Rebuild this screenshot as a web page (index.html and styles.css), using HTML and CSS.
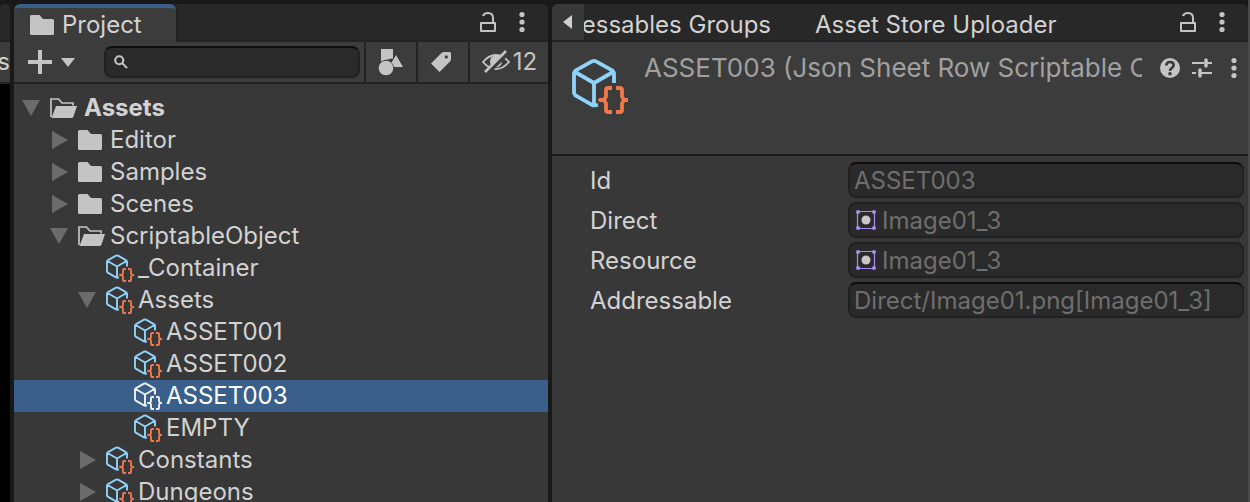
FILE: index.html
```html
<!DOCTYPE html>
<html lang="en">
<head>
<meta charset="utf-8">
<title>Editor</title>
<link rel="stylesheet" href="styles.css">
</head>
<body>
<svg class="defs" aria-hidden="true">
  <symbol id="folder" viewBox="0 0 28 28"><path fill="#c4c4c4" d="M0 5.500Q0 4 1.500 4H9.500L13 8H22.500Q24 8 24 9.500V22.500Q24 24 22.500 24H1.500Q0 24 0 22.500Z"/></symbol>
  <symbol id="folder-open" viewBox="0 0 28 28"><path fill="none" stroke="#c4c4c4" stroke-width="1.700" d="M1 23V5H8.500L12 9H23V11.500"/><path fill="#c4c4c4" d="M6 12H27L23.500 22.500Q23 24 21.500 24H1.500Z"/></symbol>
  <symbol id="asset" viewBox="0 0 28 28">
    <g fill="none" stroke-width="1.900" stroke-linejoin="round">
      <path class="cube" d="M21 12.500V7.500L20.300 6.300L12 1.700Q11 1.200 10 1.700L1.700 6.300L1 7.500V17.500L1.700 18.700L10 23.400Q11 24 13 23.400M1.500 7L11 12.500L20.500 7M11 12.500V23.700"/>
      <path class="braces" d="M20 15H18Q17 15 17 16V19.300L16 21H14H16L17 22.700V26Q17 27 18 27H20M22 15H24Q25 15 25 16V19.300L26 21H28H26L25 22.700V26Q25 27 24 27H22"/>
    </g>
  </symbol>
  <symbol id="down" viewBox="0 0 18 18"><path fill="#6b6b6b" d="M0 1H18L9 17Z"/></symbol>
  <symbol id="right" viewBox="0 0 18 18"><path fill="#6b6b6b" d="M2 0L18 9L2 18Z"/></symbol>
  <symbol id="lock" viewBox="0 0 20 24"><path fill="none" stroke="#c4c4c4" stroke-width="2" stroke-linejoin="round" d="M3 13H17V21H3ZM15 13V8Q15 3 10 3Q6 3 5 6"/></symbol>
  <symbol id="dots" viewBox="0 0 8 24"><g fill="#c4c4c4"><circle cx="4" cy="4.500" r="2.600"/><circle cx="4" cy="12" r="2.600"/><circle cx="4" cy="19.500" r="2.600"/></g></symbol>
  <symbol id="sprite" viewBox="0 0 20 20"><path fill="none" stroke="#a48ef0" stroke-width="1.200" d="M1.500 1.500H18.500V18.500H1.500Z"/><g fill="#a48ef0"><circle cx="2" cy="2" r="2"/><circle cx="18" cy="2" r="2"/><circle cx="2" cy="18" r="2"/><circle cx="18" cy="18" r="2"/></g><circle cx="10" cy="10" r="4.500" fill="#c8c8c8"/></symbol>
</svg>
<main class="editor">
  <section class="panel edge" aria-label="Scene">
    <div class="tabbar"></div>
    <div class="toolbar edge-text">s</div>
    <div class="viewport"></div>
  </section>
  <section class="panel project" aria-label="Project">
    <div class="tabbar">
      <button class="tab active"><svg class="tab-icon" viewBox="0 0 24 28"><use href="#folder" width="28" height="28"/></svg>Project</button>
      <div class="tab-actions">
        <button aria-label="Lock"><svg class="lock"><use href="#lock"/></svg></button>
        <button aria-label="Menu"><svg class="dots"><use href="#dots"/></svg></button>
      </div>
    </div>
    <div class="toolbar">
      <button class="create" aria-label="Create"><svg width="48" height="24" viewBox="0 0 48 24"><path stroke="#c4c4c4" stroke-width="4" d="M0 12H24M12 0V24"/><path fill="#c4c4c4" d="M33 8H47L40 17Z"/></svg></button>
      <label class="search"><svg width="14" height="14" viewBox="0 0 16 16"><circle cx="6" cy="6" r="4.600" fill="none" stroke="#c4c4c4" stroke-width="2.400"/><path stroke="#c4c4c4" stroke-width="2.400" d="M9 9L15 15"/></svg><input type="text" aria-label="Search"></label>
      <button class="tool" aria-label="Filter by type"><svg width="26" height="28" viewBox="0 0 26 28"><g fill="#c4c4c4"><path d="M3 1H15V10.500Q12 10.500 10 11.500Q6 11.500 3 13.500Z"/><circle cx="8" cy="20" r="7.300"/><path d="M18 7L25 19H16Q15.500 16 13.500 14.500Z"/></g></svg></button>
      <button class="tool tag" aria-label="Filter by label"><svg width="22" height="22" viewBox="0 0 22 22"><path fill="#c4c4c4" fill-rule="evenodd" d="M1 12.500L11.500 2Q12.500 1 14 1H19.500Q21 1 21 2.500V8Q21 9.500 20 10.500L9.500 21ZM16.300 4.300A1.600 1.600 0 1 0 16.300 7.500A1.600 1.600 0 1 0 16.300 4.300Z"/></svg></button>
      <button class="tool count" aria-label="Hidden packages 12"><svg width="30" height="26" viewBox="0 0 30 26"><path fill="none" stroke="#c4c4c4" stroke-width="1.900" d="M2 13Q8 6 15 6Q22 6 28 13Q22 20 15 20Q8 20 2 13Z"/><circle cx="15" cy="12.500" r="6" fill="#c4c4c4"/><path stroke="#3c3c3c" stroke-width="5" d="M6 24L27 3"/><path stroke="#c4c4c4" stroke-width="2.600" d="M4 23L25 2"/></svg>12</button>
    </div>
    <ul class="tree">
      <li class="row l0 root"><button class="fold" aria-label="Collapse"><svg><use href="#down"/></svg></button><svg class="icon"><use href="#folder-open"/></svg>Assets</li>
      <li class="row l1"><button class="fold" aria-label="Expand"><svg><use href="#right"/></svg></button><svg class="icon"><use href="#folder"/></svg>Editor</li>
      <li class="row l1"><button class="fold" aria-label="Expand"><svg><use href="#right"/></svg></button><svg class="icon"><use href="#folder"/></svg>Samples</li>
      <li class="row l1"><button class="fold" aria-label="Expand"><svg><use href="#right"/></svg></button><svg class="icon"><use href="#folder"/></svg>Scenes</li>
      <li class="row l1"><button class="fold" aria-label="Collapse"><svg><use href="#down"/></svg></button><svg class="icon"><use href="#folder-open"/></svg>ScriptableObject</li>
      <li class="row l2"><span class="fold"></span><svg class="icon"><use href="#asset"/></svg>_Container</li>
      <li class="row l2"><button class="fold" aria-label="Collapse"><svg><use href="#down"/></svg></button><svg class="icon"><use href="#asset"/></svg>Assets</li>
      <li class="row l3"><span class="fold"></span><svg class="icon"><use href="#asset"/></svg>ASSET001</li>
      <li class="row l3"><span class="fold"></span><svg class="icon"><use href="#asset"/></svg>ASSET002</li>
      <li class="row l3 selected"><span class="fold"></span><svg class="icon"><use href="#asset"/></svg>ASSET003</li>
      <li class="row l3"><span class="fold"></span><svg class="icon"><use href="#asset"/></svg>EMPTY</li>
      <li class="row l2"><button class="fold" aria-label="Expand"><svg><use href="#right"/></svg></button><svg class="icon"><use href="#asset"/></svg>Constants</li>
      <li class="row l2"><button class="fold" aria-label="Expand"><svg><use href="#right"/></svg></button><svg class="icon"><use href="#asset"/></svg>Dungeons</li>
    </ul>
  </section>
  <section class="panel inspector" aria-label="Inspector">
    <div class="tabbar">
      <button class="scroll" aria-label="Scroll tabs left"><svg width="10" height="16" viewBox="0 0 10 16"><path fill="#d0d0d0" d="M9 1V15L0 8Z"/></svg></button>
      <button class="tab clipped">Addressables Groups</button>
      <button class="tab uploader">Asset Store Uploader</button>
      <div class="tab-actions">
        <button aria-label="Lock"><svg class="lock"><use href="#lock"/></svg></button>
        <button aria-label="Menu"><svg class="dots"><use href="#dots"/></svg></button>
      </div>
    </div>
    <header class="head">
      <svg class="big-icon"><use href="#asset"/></svg>
      <h1>ASSET003 (Json Sheet Row Scriptable Object)</h1>
      <div class="head-actions">
        <button aria-label="Help"><svg width="20" height="20" viewBox="0 0 20 20"><circle cx="10" cy="10" r="10" fill="#c4c4c4"/><path fill="none" stroke="#3c3c3c" stroke-width="2.600" d="M6.300 7.500Q6.500 4 10 4Q13.700 4 13.700 7Q13.700 8.500 12 9.800Q10 11 10 13"/><circle cx="10" cy="15.800" r="1.800" fill="#3c3c3c"/></svg></button>
        <button aria-label="Presets"><svg width="20" height="20" viewBox="0 0 20 20"><path stroke="#c4c4c4" stroke-width="2" d="M0 5H12M14 5H20M0 15H4M8 15H20"/><path stroke="#c4c4c4" stroke-width="3.500" stroke-linecap="round" d="M14 2V8M8 12V18"/></svg></button>
        <button aria-label="Menu"><svg class="dots"><use href="#dots"/></svg></button>
      </div>
    </header>
    <form class="fields">
      <label for="f-id">Id</label>
      <div class="field text"><input id="f-id" value="ASSET003" readonly></div>
      <label for="f-direct">Direct</label>
      <div class="field"><svg class="sprite"><use href="#sprite"/></svg><input id="f-direct" value="Image01_3" readonly></div>
      <label for="f-resource">Resource</label>
      <div class="field"><svg class="sprite"><use href="#sprite"/></svg><input id="f-resource" value="Image01_3" readonly></div>
      <label for="f-addr">Addressable</label>
      <div class="field text"><input id="f-addr" value="Direct/Image01.png[Image01_3]" readonly></div>
    </form>
  </section>
</main>
</body>
</html>
```
FILE: styles.css
```css
* { box-sizing: border-box; }
body {
  margin: 0;
  background: #191919;
  color: #d2d2d2;
  font: 24px/32px Inter, "Liberation Sans", sans-serif;
}
button, input {
  margin: 0;
  padding: 0;
  border: 0;
  background: none;
  color: inherit;
  font: inherit;
}
button { display: flex; align-items: center; flex: none; }
svg { display: block; flex: none; }
.defs { position: absolute; width: 0; height: 0; }
.editor {
  display: grid;
  grid-template-columns: 10px minmax(0, 534fr) minmax(0, 696fr);
  gap: 4px;
  height: 100vh;
  padding-top: 4px;
  border-right: 2px solid #4a4a4a;
  overflow: hidden;
}
.panel {
  display: flex;
  flex-direction: column;
  min-width: 0;
  min-height: 0;
  border-radius: 6px 6px 0 0;
  background: #383838;
  overflow: hidden;
}
.tabbar {
  display: flex;
  flex: none;
  height: 38px;
  background: #282828;
  border-bottom: 2px solid #232323;
}
.tab { white-space: nowrap; padding-top: 6px; }
.tab.active {
  gap: 8px;
  height: 38px;
  padding: 0 34px 0 16px;
  background: #3c3c3c;
  border-top: 4px solid #3a5f8a;
  border-radius: 6px 6px 0 0;
  box-shadow: 2px 0 #232323;
}
.tab-icon { width: 24px; height: 28px; }
.tab-actions { display: flex; gap: 20px; margin-left: auto; padding-right: 22px; }
.lock { width: 20px; height: 24px; }
.dots { width: 8px; height: 24px; }
.toolbar {
  display: flex;
  flex: none;
  height: 42px;
  background: #3c3c3c;
  border-bottom: 2px solid #232323;
}
.edge-text { justify-content: flex-end; align-items: center; }
.viewport { flex: 1; background: #000; }
.create { padding: 0 28px 0 14px; }
.search {
  display: flex;
  flex: 1;
  align-items: center;
  min-width: 0;
  height: 32px;
  margin: 4px 4px 4px 0;
  padding-left: 8px;
  gap: 8px;
  background: #2a2a2a;
  border: 2px solid #212121;
  border-top-color: #0d0d0d;
  border-radius: 8px;
}
.search input { flex: 1; min-width: 0; height: 28px; outline: 0; }
.tool {
  justify-content: center;
  width: 52px;
  border-left: 2px solid #232323;
  color: #c4c4c4;
}
.tool.tag { padding-right: 4px; }
.tool.count { gap: 2px; width: 80px; }
.tree {
  flex: 1;
  min-height: 0;
  margin: 0;
  padding: 8px 0 0;
  list-style: none;
  overflow: hidden;
}
.row { display: flex; align-items: center; height: 32px; line-height: 30px; white-space: nowrap; }
.row::after { content: ""; height: 32px; }
.l0 { padding-left: 8px; }
.l1 { padding-left: 36px; }
.l2 { padding-left: 64px; }
.l3 { padding-left: 92px; }
.root { font-weight: 700; }
.fold { flex: none; width: 18px; height: 18px; margin-right: 10px; }
.fold svg { width: 18px; height: 18px; }
.icon { width: 28px; height: 28px; margin-right: 4px; }
.root .icon { margin-right: 6px; }
.cube { stroke: var(--cube, #8fd3fb); }
.braces { stroke: var(--braces, #f0784b); }
.selected { --cube: #f0f0f0; --braces: #f0f0f0; background: #3a5f8a; color: #fff; }
.scroll { justify-content: center; width: 32px; background: #383838; }
.clipped {
  justify-content: flex-end;
  flex: 0 1 187px;
  min-width: 0;
  overflow: hidden;
}
.uploader { margin-left: 44px; }
.head {
  display: flex;
  flex: none;
  align-items: flex-start;
  height: 114px;
  padding: 16px 10px 0 20px;
  background: #3c3c3c;
  border-bottom: 2px solid #1a1a1a;
}
.big-icon { width: 56px; height: 56px; }
.head h1 {
  flex: 1;
  min-width: 0;
  height: 32px;
  margin: -6px 18px 0 16px;
  overflow: hidden;
  color: #a0a0a0;
  font-size: 26px;
  font-weight: 400;
  line-height: 32px;
  white-space: nowrap;
}
.head-actions { display: flex; align-items: center; gap: 12px; height: 20px; }
.head-actions button:last-child { margin-left: 6px; }
.fields {
  display: grid;
  grid-template-columns: 258px minmax(0, 1fr);
  row-gap: 4px;
  align-items: center;
  padding: 6px 4px 0 38px;
}
.fields label { padding-top: 2px; }
.field {
  display: flex;
  align-items: center;
  gap: 6px;
  height: 36px;
  padding: 0 4px;
  background: #2a2a2a;
  border: 2px solid #202020;
  border-radius: 8px;
  color: #6e6e6e;
}
.field.text { border-top-color: #0d0d0d; }
.field input { flex: 1; min-width: 0; height: 32px; padding-top: 2px; outline: 0; }
.sprite { width: 20px; height: 20px; margin-left: 2px; }
```
